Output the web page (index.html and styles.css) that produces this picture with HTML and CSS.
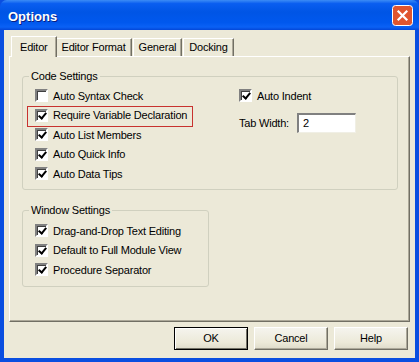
FILE: index.html
```html
<!DOCTYPE html>
<html lang="en">
<head>
  <meta charset="UTF-8" />
  <title>Options</title>
  <link rel="stylesheet" href="styles.css">
</head>
<body>
  <div class="window">
    <div class="titlebar">
      <span class="title">Options</span>
      <svg class="close" width="21" height="21" viewBox="0 0 21 21">
        <rect x="0.5" y="0.5" width="20" height="20" rx="3" fill="#e0552e" stroke="#fff"/>
        <path d="M6.5 6.5 L14.5 14.5 M14.5 6.5 L6.5 14.5" stroke="#fff" stroke-width="2.2" stroke-linecap="square"/>
      </svg>
    </div>

    <div class="frame">
      <div class="tabs">
        <div class="tab active">Editor</div>
        <div class="tab">Editor Format</div>
        <div class="tab">General</div>
        <div class="tab">Docking</div>
      </div>

      <div class="panel">
        <fieldset class="group code-group">
          <legend>Code Settings</legend>
          <div class="cols">
            <div class="col">
              <label class="check"><span class="box"></span>Auto Syntax Check</label>
              <label class="check highlight"><span class="box on"></span>Require Variable Declaration</label>
              <label class="check"><span class="box on"></span>Auto List Members</label>
              <label class="check"><span class="box on"></span>Auto Quick Info</label>
              <label class="check"><span class="box on"></span>Auto Data Tips</label>
            </div>
            <div class="col right-col">
              <label class="check"><span class="box on"></span>Auto Indent</label>
              <div class="field">
                <span>Tab Width:</span>
                <div class="input">2</div>
              </div>
            </div>
          </div>
        </fieldset>

        <fieldset class="group window-group">
          <legend>Window Settings</legend>
          <label class="check"><span class="box on"></span>Drag-and-Drop Text Editing</label>
          <label class="check"><span class="box on"></span>Default to Full Module View</label>
          <label class="check"><span class="box on"></span>Procedure Separator</label>
        </fieldset>
      </div>

      <div class="buttons">
        <div class="btn default">OK</div>
        <div class="btn">Cancel</div>
        <div class="btn">Help</div>
      </div>
    </div>
  </div>
</body>
</html>
```

FILE: styles.css
```css
* {
  box-sizing: border-box;
}

body {
  margin: 0;
  font-family: 'Liberation Sans', Arial, sans-serif;
  font-size: 11px;
  letter-spacing: -0.2px;
  color: #000;
  background: #fff;
}

.window {
  width: 419px;
  height: 362px;
  display: flex;
  flex-direction: column;
  background: #0a4ee0;
}

.titlebar {
  height: 30px;
  flex: none;
  display: flex;
  align-items: center;
  justify-content: space-between;
  padding: 2px 6px 0 8px;
  background: linear-gradient(#3c8cf5 0, #0a5ef0 12%, #0055e5 40%, #0058ee 75%, #0a61f5 90%, #0347d8 100%);
  border-radius: 7px 7px 0 0;
}

.title {
  color: #fff;
  font-weight: bold;
  font-size: 13px;
  letter-spacing: 0;
  text-shadow: 1px 1px 0 #0a1e80;
}

.close {
  margin-top: -1px;
}

.frame {
  flex: 1;
  margin: 0 4px 4px 4px;
  background: #ece9d8;
  padding: 6px 5px 0 5px;
  display: flex;
  flex-direction: column;
}

.tabs {
  display: flex;
  padding-left: 4px;
  height: 20px;
  flex: none;
  align-items: flex-end;
}

.tab {
  height: 18px;
  line-height: 17px;
  padding: 0 5px;
  border-top: 1px solid #fff;
  border-left: 1px solid #fff;
  border-right: 1px solid #716f64;
  box-shadow: inset -1px 0 0 #aca899;
  margin-right: 1px;
}

.tab.active {
  height: 21px;
  line-height: 20px;
  padding: 0 8px;
  margin: 0 -1px -1px -2px;
  position: relative;
  z-index: 1;
  background: #ece9d8;
}

.panel {
  height: 266px;
  flex: none;
  border-top: 1px solid #fff;
  border-left: 1px solid #fff;
  border-right: 1px solid #716f64;
  border-bottom: 1px solid #716f64;
  box-shadow: inset -1px -1px 0 #aca899;
  padding: 13px 11px 0 12px;
}

.group {
  margin: 0;
  border: 1px solid #d0d0bf;
  border-radius: 3px;
  padding: 0 12px;
}

.group legend {
  padding: 0 2px;
  margin-left: -6px;
  color: #000;
}

.code-group {
  height: 120px;
  padding-top: 4px;
}

.window-group {
  margin-top: 14px;
  width: 187px;
  height: 83px;
  padding-top: 5px;
}

.cols {
  display: flex;
}

.col {
  width: 204px;
  display: flex;
  flex-direction: column;
}

.right-col {
  width: auto;
  gap: 7px;
}

.check {
  display: flex;
  align-items: center;
  height: 19.5px;
  gap: 5px;
  white-space: nowrap;
  position: relative;
}

.box {
  width: 13px;
  height: 13px;
  background: #fff;
  border-top: 2px solid #808080;
  border-left: 2px solid #808080;
  border-right: 2px solid #fff;
  border-bottom: 2px solid #fff;
  box-shadow: inset 1px 1px 0 #404040;
  flex: none;
  position: relative;
}

.box.on::after {
  content: "";
  position: absolute;
  left: 3px;
  top: 0;
  width: 3px;
  height: 6px;
  border-right: 2px solid #000;
  border-bottom: 2px solid #000;
  transform: rotate(40deg);
}

.highlight::after {
  content: "";
  position: absolute;
  left: -8px;
  top: 0;
  width: 164px;
  height: 19px;
  border: 1px solid #c8322f;
}

.field {
  display: flex;
  align-items: center;
  gap: 8px;
}

.input {
  width: 59px;
  height: 20px;
  line-height: 17px;
  padding-left: 4px;
  background: #fff;
  border-top: 2px solid #808080;
  border-left: 2px solid #808080;
  border-right: 1px solid #f0efe5;
  border-bottom: 1px solid #f0efe5;
}

.buttons {
  display: flex;
  justify-content: flex-end;
  gap: 6px;
  padding: 5px 2px 0 0;
}

.btn {
  width: 74px;
  height: 23px;
  line-height: 21px;
  text-align: center;
  background: linear-gradient(#f5f4ee, #ece9d8 70%, #dedbca);
  border-top: 1px solid #fff;
  border-left: 1px solid #fff;
  border-right: 1px solid #716f64;
  border-bottom: 1px solid #716f64;
  box-shadow: inset -1px -1px 0 #aca899;
}

.btn.default {
  border: 1px solid #000;
  box-shadow: inset 1px 1px 0 #fff, inset -1px -1px 0 #716f64;
}
```
